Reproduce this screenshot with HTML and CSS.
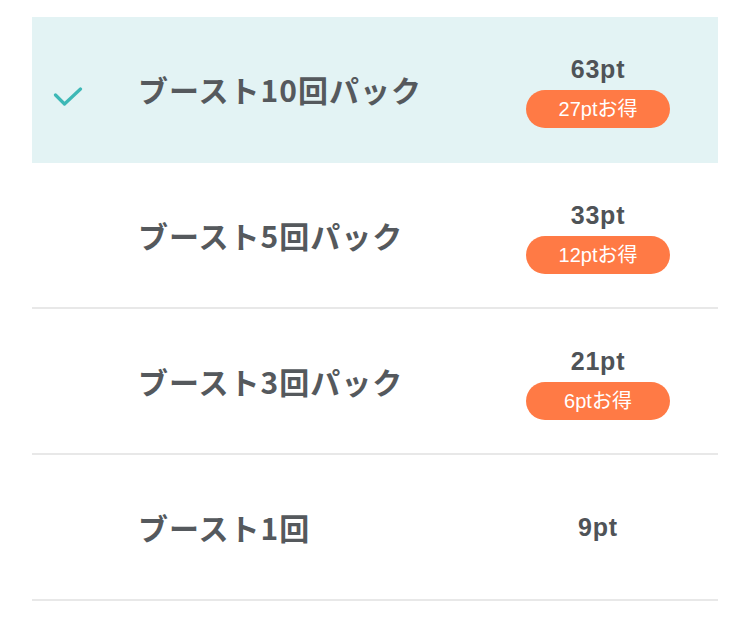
FILE: index.html
```html
<!DOCTYPE html>
<html lang="ja">
<head>
<meta charset="utf-8">
<link rel="stylesheet" href="styles.css">
</head>
<body>
<ul class="list">
  <li class="row selected">
    <div class="check">
      <svg width="30" height="20" viewBox="0 0 30 20"><path d="M2.5 8 L11.5 17 L27.5 2" fill="none" stroke="#3db8b6" stroke-width="3.2" stroke-linecap="round" stroke-linejoin="round"/></svg>
    </div>
    <div class="title">ブースト10回パック</div>
    <div class="price">
      <div class="pt">63pt</div>
      <div class="badge">27ptお得</div>
    </div>
  </li>
  <li class="row">
    <div class="check"></div>
    <div class="title">ブースト5回パック</div>
    <div class="price">
      <div class="pt">33pt</div>
      <div class="badge">12ptお得</div>
    </div>
  </li>
  <li class="row">
    <div class="check"></div>
    <div class="title">ブースト3回パック</div>
    <div class="price">
      <div class="pt">21pt</div>
      <div class="badge">6ptお得</div>
    </div>
  </li>
  <li class="row">
    <div class="check"></div>
    <div class="title">ブースト1回</div>
    <div class="price single">
      <div class="pt">9pt</div>
    </div>
  </li>
</ul>
</body>
</html>
```
FILE: styles.css
```css
html, body {
  margin: 0;
  padding: 0;
  background: #ffffff;
}
.list {
  list-style: none;
  margin: 17px 0 0 32px;
  padding: 0;
  width: 686px;
}
.row {
  box-sizing: border-box;
  height: 146px;
  display: flex;
  align-items: center;
  border-bottom: 2px solid #e8e8e8;
}
.row.selected {
  background: #e3f3f4;
  border-bottom-color: #e3f3f4;
}
.check {
  width: 106px;
  flex: none;
  display: flex;
  align-items: center;
  padding-left: 21px;
  box-sizing: border-box;
  padding-top: 16px;
}
.check svg {
  display: block;
}
.title {
  flex: 1;
  font-family: "Noto Sans CJK JP", "Liberation Sans", sans-serif;
  font-weight: 700;
  font-size: 30px;
  line-height: 40px;
  color: #55595d;
  letter-spacing: 1px;
}
.price {
  width: 144px;
  flex: none;
  margin-right: 48px;
  display: flex;
  flex-direction: column;
  align-items: center;
  margin-top: 4px;
}
.price.single {
  margin-top: 0;
}
.pt {
  font-family: "Liberation Sans", Arial, sans-serif;
  font-weight: 700;
  font-size: 25px;
  line-height: 30px;
  letter-spacing: 0.8px;
  color: #4f5357;
}
.badge {
  margin-top: 6px;
  width: 144px;
  height: 38px;
  border-radius: 19px;
  background: #ff7a45;
  color: #ffffff;
  font-family: "Liberation Sans", "Noto Sans CJK JP", sans-serif;
  font-size: 20px;
  line-height: 38px;
  text-align: center;
}
```
